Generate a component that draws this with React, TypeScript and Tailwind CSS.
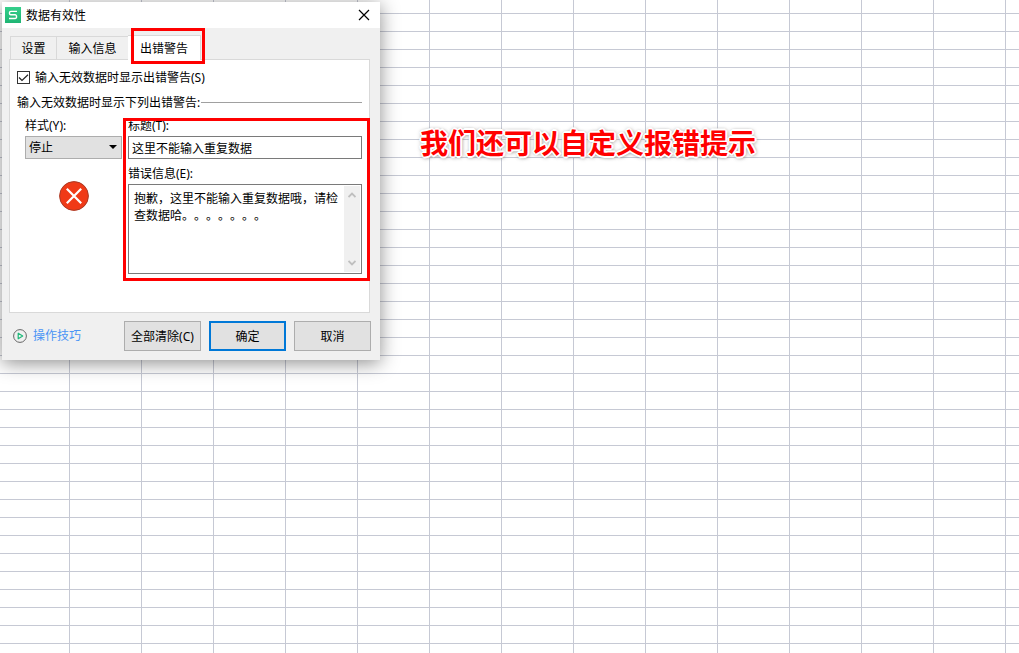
import { useState } from 'react';
import type { ReactNode } from 'react';
import clsx from 'clsx';

const TABS = [
  { label: '设置', width: 'w-[46px]' },
  { label: '输入信息', width: 'w-[72px]' },
  { label: '出错警告', width: 'w-[73px]', highlighted: true },
];

/** 红色标注框，盖在被强调的区域上面 */
function Highlight({ className }: { className: string }) {
  return <span className={clsx('absolute z-20 border-[3px] border-[#ff0000] pointer-events-none', className)} />;
}

function TitleBar() {
  return (
    <header className="flex items-center h-[26px] pl-[3px] pr-[10px] bg-white">
      <svg viewBox="0 0 16 16" className="size-4 mr-[5px]" aria-hidden="true">
        <defs>
          <linearGradient id="logo" x1="0" y1="0" x2="0" y2="1">
            <stop offset="0" stopColor="#35cf8c" />
            <stop offset="1" stopColor="#1fb574" />
          </linearGradient>
        </defs>
        <rect width="16" height="16" fill="url(#logo)" />
        <path
          d="M12 4.4H5.8A1.3 1.3 0 0 0 4.5 5.7v.8a1.3 1.3 0 0 0 1.3 1.3h4.4a1.3 1.3 0 0 1 1.3 1.3v1.1a1.3 1.3 0 0 1-1.3 1.3H4"
          fill="none"
          stroke="#fff"
          strokeWidth="1.4"
        />
      </svg>
      <h1 className="flex-1 pt-px">数据有效性</h1>
      <button type="button" aria-label="关闭" className="size-[12px]">
        <svg viewBox="0 0 12 12" className="size-[12px]" fill="none" stroke="#000" strokeWidth="1.2">
          <path d="M1 1l10 10M11 1L1 11" />
        </svg>
      </button>
    </header>
  );
}

function Tabs({ active, onChange }: { active: string; onChange: (tab: string) => void }) {
  return (
    <div role="tablist" className="flex items-end h-[31px] pl-2">
      {TABS.map(({ label, width, highlighted }) => (
        <button
          key={label}
          type="button"
          role="tab"
          aria-selected={label === active}
          onClick={() => onChange(label)}
          className={clsx(
            'relative pt-px border-t border-[#d9d9d9]',
            width,
            label === active ? 'h-[25px] -mb-px border-r bg-white z-10' : 'h-[23px] border-l',
          )}
        >
          {label}
          {highlighted && <Highlight className="left-[3px] -top-2 -right-[5px] -bottom-1" />}
        </button>
      ))}
    </div>
  );
}

function ShowAlertCheckbox() {
  const [checked, setChecked] = useState(true);
  return (
    <label className="flex items-center h-5">
      <span className="relative size-[13px] mr-[5px]">
        <input
          type="checkbox"
          checked={checked}
          onChange={(e) => setChecked(e.target.checked)}
          className="block appearance-none size-[13px] border border-[#333333] bg-white"
        />
        {checked && (
          <svg viewBox="0 0 13 13" className="absolute inset-0 pointer-events-none" fill="none" stroke="#222" strokeWidth="1.2">
            <path d="M2 6.5l3 3L11 3.8" />
          </svg>
        )}
      </span>
      <span className="pt-[2px]">输入无效数据时显示出错警告(S)</span>
    </label>
  );
}

function ScrollBar() {
  return (
    <div className="flex flex-col justify-between items-center w-4 m-px py-[6px] bg-[#f0f0f0]" aria-hidden="true">
      <svg viewBox="0 0 8 6" className="w-2 h-[6px]" fill="none" stroke="#bfbfbf" strokeWidth="1.8">
        <path d="M0.5 5L4 1.5L7.5 5" />
      </svg>
      <svg viewBox="0 0 8 6" className="w-2 h-[6px]" fill="none" stroke="#bfbfbf" strokeWidth="1.8">
        <path d="M0.5 1L4 4.5L7.5 1" />
      </svg>
    </div>
  );
}

function AlertFields() {
  return (
    <div className="flex gap-[6px] pl-2">
      <div className="flex flex-col w-[97px]">
        <label htmlFor="style" className="h-5 leading-5">
          样式(Y):
        </label>
        <div className="relative">
          <select
            id="style"
            defaultValue="停止"
            className="block appearance-none w-full h-[23px] pl-[3px] border border-[#adadad] bg-[#e1e1e1]"
          >
            <option>停止</option>
            <option>警告</option>
            <option>信息</option>
          </select>
          <svg viewBox="0 0 8 4" className="absolute right-[5px] top-[9px] w-2 h-1 pointer-events-none">
            <path d="M0 0h8L4 4z" />
          </svg>
        </div>
        <svg viewBox="0 0 30 30" className="size-[30px] mt-[22px] self-center" aria-hidden="true">
          <circle cx="15" cy="15" r="14.4" fill="#f03a17" stroke="#a93a25" strokeWidth="1" />
          <path d="M7.8 7.8l14.4 14.4M22.2 7.8L7.8 22.2" stroke="#fff" strokeWidth="2.2" />
        </svg>
      </div>

      <div className="relative flex-1 flex flex-col">
        <label htmlFor="title" className="h-5 leading-5">
          标题(T):
        </label>
        <input
          id="title"
          defaultValue="这里不能输入重复数据"
          className="h-[23px] px-[3px] border border-[#7a7a7a] bg-white"
        />
        <label htmlFor="message" className="h-5 leading-5 mt-[5px]">
          错误信息(E):
        </label>
        <div className="flex h-[90px] border border-[#7a7a7a] bg-white">
          <textarea
            id="message"
            defaultValue="抱歉，这里不能输入重复数据哦，请检查数据哈。。。。。。。"
            // 连续的句号保持全角宽度
            className="flex-1 min-w-0 pl-[5px] pt-[5px] leading-[17px] resize-none overflow-hidden [text-spacing-trim:space-all]"
          />
          <ScrollBar />
        </div>
        <Highlight className="-left-[5px] top-[2px] -right-2 -bottom-[7px]" />
      </div>
    </div>
  );
}

function DialogButton({ primary, children }: { primary?: boolean; children: ReactNode }) {
  return (
    <button
      type="button"
      className={clsx(
        'w-[77px] h-[30px] pt-px bg-[#e1e1e1]',
        primary ? 'border-2 border-[#0078d7]' : 'border border-[#adadad]',
      )}
    >
      {children}
    </button>
  );
}

function ValidationDialog() {
  const [tab, setTab] = useState('出错警告');
  return (
    <section
      role="dialog"
      aria-label="数据有效性"
      className="shrink-0 w-[378px] bg-[#f0f0f0] shadow-[0_3px_18px_rgba(0,0,0,0.45)]"
    >
      <TitleBar />
      <Tabs active={tab} onChange={setTab} />
      <div role="tabpanel" className="ml-[7px] mr-[10px] h-[254px] pt-[7px] px-[7px] border border-[#d9d9d9] bg-white">
        <ShowAlertCheckbox />
        <div className="flex items-center h-5 mt-[5px] mb-1">
          <h2 className="pt-[2px]">输入无效数据时显示下列出错警告:</h2>
          <hr className="flex-1 ml-px border-[#a0a0a0]" />
        </div>
        <AlertFields />
      </div>
      <footer className="flex items-center gap-2 pt-2 pb-[9px] pl-[11px] pr-[9px]">
        <a href="#tips" className="flex items-center gap-[6px] mr-auto text-[#4a94f5]">
          <svg viewBox="0 0 14 14" className="size-[14px]" fill="none">
            <circle cx="7" cy="7" r="6.4" stroke="#666" strokeWidth="1" />
            <path d="M5.2 4.2v5.6L9.7 7z" stroke="#1fb97a" strokeWidth="1.2" strokeLinejoin="round" />
          </svg>
          操作技巧
        </a>
        <DialogButton>全部清除(C)</DialogButton>
        <DialogButton primary>确定</DialogButton>
        <DialogButton>取消</DialogButton>
      </footer>
    </section>
  );
}

export default function App() {
  return (
    <main
      className={clsx(
        'flex items-start min-h-screen p-[2px] overflow-hidden bg-white text-black text-[12px] leading-[18px]',
        "font-['Noto_Sans','Noto_Sans_CJK_SC',sans-serif]",
        // 表格网格线：列宽 72，行高 18
        'bg-[linear-gradient(to_right,#c6c9d4_1px,transparent_1px),linear-gradient(to_bottom,#c6c9d4_1px,transparent_1px)]',
        'bg-[size:72px_18px] bg-[position:69px_13px]',
      )}
    >
      <ValidationDialog />
      <p
        className={clsx(
          'ml-10 mt-[121px] text-[28px] leading-10 font-bold whitespace-nowrap text-[#ff0000]',
          '[text-shadow:1px_1px_0_#fff,-1px_-1px_0_#fff,1px_-1px_0_#fff,-1px_1px_0_#fff,2px_0_0_#fff,-2px_0_0_#fff,0_2px_0_#fff,0_-2px_0_#fff,0_0_4px_#777,1px_1px_4px_#777]',
        )}
      >
        我们还可以自定义报错提示
      </p>
    </main>
  );
}
